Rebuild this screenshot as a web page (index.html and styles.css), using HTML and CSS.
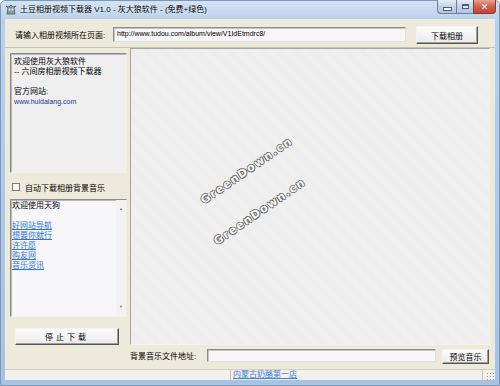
FILE: index.html
```html
<!DOCTYPE html>
<html lang="zh-CN">
<head>
    <meta charset="UTF-8">
    <meta name="viewport" content="width=device-width, initial-scale=1.0">
    <title>土豆相册视频下载器 V1.0</title>
    <link rel="stylesheet" href="styles.css">
</head>
<body>
    <div class="window">
        <div class="titlebar">
            <svg class="app-icon" width="12" height="12" viewBox="0 0 12 12">
                <path d="M2 10 L3 4 L1 2 L4 3 L6 1 L8 3 L11 2 L9 4 L10 10 Z" fill="#8c9aa8" stroke="#4f5b66" stroke-width="0.8"/>
                <circle cx="4.5" cy="5.5" r="0.9" fill="#fff"/>
                <circle cx="7.5" cy="5.5" r="0.9" fill="#fff"/>
            </svg>
            <span class="title">土豆相册视频下载器 V1.0 - 灰大狼软件 - (免费+绿色)</span>
            <div class="caption-buttons">
                <span class="cap cap-min"><i></i></span>
                <span class="cap cap-max"><i></i></span>
                <span class="cap cap-close">✕</span>
            </div>
        </div>

        <div class="client">
            <div class="url-row">
                <span class="row-label">请输入相册视频所在页面:</span>
                <div class="field url-field">http://www.tudou.com/album/view/V1IdEtmdrc8/</div>
                <button class="btn btn-download">下载相册</button>
            </div>

            <div class="main">
                <div class="side">
                    <div class="memo memo-info">
                        欢迎使用灰大狼软件<br>
                        -- 六间房相册视频下载器<br>
                        <br>
                        官方网站:<br>
                        <span class="site">www.huidalang.com</span>
                    </div>

                    <label class="check">
                        <span class="check-box"></span>
                        自动下载相册背景音乐
                    </label>

                    <div class="memo memo-links">
                        <div class="memo-text">
                            欢迎使用天狗<br>
                            <br>
                            <a href="#">好网站导航</a><br>
                            <a href="#">想要你就行</a><br>
                            <a href="#">许许愿</a><br>
                            <a href="#">购友网</a><br>
                            <a href="#">音乐资讯</a>
                        </div>
                        <div class="scrollbar">
                            <span class="arrow">▲</span>
                            <span class="arrow">▼</span>
                        </div>
                    </div>

                    <button class="btn btn-stop">停止下载</button>
                </div>

                <div class="canvas">
                    <span class="mark mark-1">GreenDown.cn</span>
                    <span class="mark mark-2">GreenDown.cn</span>
                </div>
            </div>

            <div class="music-row">
                <span class="row-label music-label">背景音乐文件地址:</span>
                <div class="field music-field"></div>
                <button class="btn btn-preview">预览音乐</button>
            </div>

            <div class="statusbar">
                <div class="status-panel status-left"></div>
                <div class="status-panel status-right">
                    <a href="#">内蒙古奶酪第一店</a>
                </div>
                <div class="grip"></div>
            </div>
        </div>
    </div>
</body>
</html>
```

FILE: styles.css
```css
* {
    margin: 0;
    padding: 0;
    box-sizing: border-box;
}

body {
    width: 500px;
    height: 386px;
    overflow: hidden;
    font-family: "Liberation Sans", "Noto Sans CJK SC", sans-serif;
    font-size: 8px;
    color: #000;
}

.window {
    width: 500px;
    height: 386px;
    display: flex;
    flex-direction: column;
    background: linear-gradient(to bottom, #d3e3f4 0, #b9d0ea 20px, #a9c2e2 100%);
    border: 1px solid #7d98b8;
    border-radius: 5px 5px 0 0;
}

/* title bar */
.titlebar {
    height: 19px;
    display: flex;
    align-items: center;
    padding-left: 4px;
}

.app-icon {
    margin-right: 3px;
}

.title {
    font-size: 8px;
    line-height: 10px;
    text-shadow: 0 0 3px #fff;
}

.caption-buttons {
    margin-left: auto;
    align-self: flex-start;
    display: flex;
    margin-right: 3px;
    margin-top: -1px;
}

.cap {
    height: 14px;
    display: flex;
    align-items: center;
    justify-content: center;
    border: 1px solid #6a7f98;
    border-top: none;
    background: linear-gradient(to bottom, #e4edf7, #c2d3e8 50%, #b0c5df);
}

.cap-min {
    width: 19px;
    border-radius: 0 0 0 4px;
    border-right: none;
}

.cap-min i {
    width: 7px;
    height: 2px;
    margin-top: 5px;
    background: #fff;
    border: 1px solid #4c5f76;
    box-sizing: content-box;
}

.cap-max {
    width: 17px;
    border-right: none;
}

.cap-max i {
    width: 7px;
    height: 5px;
    border: 1px solid #4c5f76;
    border-top-width: 2px;
    background: #dfe8f2;
}

.cap-close {
    width: 23px;
    border-radius: 0 0 4px 0;
    border-color: #8a3a30;
    background: linear-gradient(to bottom, #e8a194, #d3604b 50%, #c04530);
    color: #fff;
    font-family: "DejaVu Sans", sans-serif;
    font-size: 9px;
    font-weight: bold;
}

/* client area */
.client {
    flex: 1;
    margin: 0 4px 5px;
    background: #eeeadb;
    display: flex;
    flex-direction: column;
}

.row-label {
    line-height: 10px;
    white-space: nowrap;
}

.field {
    background: #f6f5f8;
    border: 1px solid;
    border-color: #8d8d8d #e2e0d6 #e2e0d6 #8d8d8d;
    box-shadow: inset 1px 1px #c4c4c4;
    font-size: 7px;
    line-height: 12px;
    padding-left: 3px;
    white-space: nowrap;
    overflow: hidden;
}

.btn {
    font-family: inherit;
    font-size: 8px;
    color: #000;
    background: linear-gradient(to bottom, #fbfbfb, #ececec);
    border: 1px solid;
    border-color: #f4f4f4 #555 #555 #f4f4f4;
    box-shadow: inset -1px -1px #a0a0a0;
}

.url-row {
    height: 29px;
    display: flex;
    align-items: flex-start;
    padding-left: 10px;
    border-bottom: 1px solid #c6c2b2;
}

.url-row .row-label {
    width: 98px;
    margin-top: 12px;
}

.url-field {
    width: 293px;
    height: 15px;
    margin-top: 8px;
}

.btn-download {
    width: 62px;
    height: 18px;
    margin-top: 7px;
    margin-left: 10px;
}

/* main area */
.main {
    height: 297px;
    display: flex;
}

.side {
    width: 117px;
    margin-left: 5px;
    display: flex;
    flex-direction: column;
}

.memo {
    border: 1px solid;
    border-color: #8b8b8b #f2f0e8 #f2f0e8 #8b8b8b;
    box-shadow: inset 1px 1px #b8b8b8;
    line-height: 10px;
}

.memo-info {
    height: 121px;
    margin-top: 5px;
    background: #efefef;
    padding: 3px 0 0 3px;
}

.site {
    color: #24398a;
    font-size: 7px;
}

.check {
    height: 26px;
    display: flex;
    align-items: center;
    gap: 5px;
    padding-left: 2px;
    padding-top: 2px;
}

.check-box {
    width: 8px;
    height: 8px;
    border: 1px solid #7a7a7a;
    background: #f8f8f8;
}

.memo-links {
    height: 119px;
    background: #f7f7fa;
    display: flex;
}

.memo-text {
    flex: 1;
    padding: 1px 0 0 1px;
    line-height: 10px;
}

.memo-text a {
    color: #2f74e0;
}

.scrollbar {
    width: 10px;
    display: flex;
    flex-direction: column;
    justify-content: space-between;
    align-items: center;
    background: #f2f2f2;
    color: #777;
    font-size: 4px;
    padding: 4px 0;
}

.btn-stop {
    width: 104px;
    height: 17px;
    margin-top: 11px;
    margin-left: 5px;
    letter-spacing: 3px;
}

.canvas {
    position: relative;
    width: 360px;
    height: 297px;
    margin-left: 3px;
    border: 1px solid;
    border-color: #a9a699 #f4f2ea #f4f2ea #a9a699;
    background: #efefef repeating-linear-gradient(45deg, #f1f1f1 0, #f1f1f1 1px, #ececec 1px, #ececec 2px);
    overflow: hidden;
}

.mark {
    position: absolute;
    width: 124px;
    height: 14px;
    line-height: 14px;
    text-align: center;
    font-family: "DejaVu Sans", sans-serif;
    font-weight: bold;
    font-size: 11px;
    letter-spacing: 1.5px;
    color: #f7f7f7;
    text-shadow: 1px 0 0 #666, -1px 0 0 #666, 0 1px 0 #666, 0 -1px 0 #666;
    transform: rotate(-34.6deg);
}

.mark-1 {
    left: 54px;
    top: 115px;
}

.mark-2 {
    left: 67px;
    top: 156px;
}

/* bottom rows */
.music-row {
    height: 24px;
    display: flex;
    align-items: flex-start;
    padding-left: 125px;
}

.music-label {
    width: 77px;
    margin-top: 7px;
}

.music-field {
    width: 229px;
    height: 13px;
    margin-top: 4px;
}

.btn-preview {
    width: 47px;
    height: 15px;
    margin-top: 4px;
    margin-left: 6px;
}

.statusbar {
    height: 11px;
    display: flex;
    border-top: 1px solid #d4d1c4;
    background: #f1f0ea;
}

.status-panel {
    border-right: 1px solid #c9c6b8;
    line-height: 10px;
}

.status-left {
    width: 226px;
}

.status-right {
    width: 252px;
    padding-left: 2px;
}

.status-right a {
    color: #3d7fe0;
}

.grip {
    flex: 1;
    background: radial-gradient(circle, #9a9a9a 0.8px, transparent 1px) 0 0 / 3px 3px;
    margin: 2px 1px 0 3px;
}
```
